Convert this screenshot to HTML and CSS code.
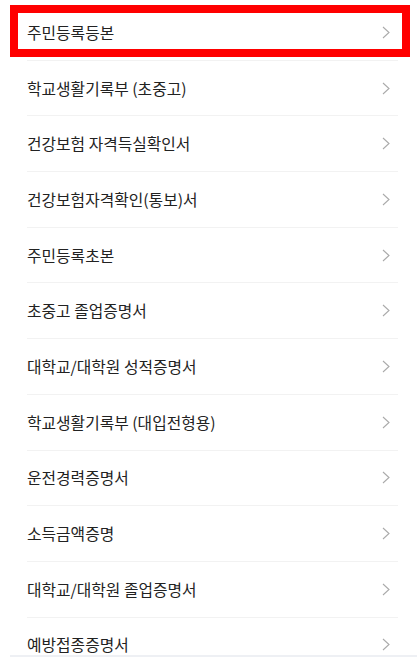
FILE: index.html
```html
<!DOCTYPE html>
<html>
<head>
    <meta charset="utf-8">
    <link rel="stylesheet" href="styles.css">
</head>
<body>
    <div class="doc-list">
        <a href="#" class="doc-item">주민등록등본<svg class="chevron" viewBox="0 0 8 13"><polyline points="1,1 7,6.5 1,12"/></svg></a>
        <a href="#" class="doc-item">학교생활기록부 (초중고)<svg class="chevron" viewBox="0 0 8 13"><polyline points="1,1 7,6.5 1,12"/></svg></a>
        <a href="#" class="doc-item">건강보험 자격득실확인서<svg class="chevron" viewBox="0 0 8 13"><polyline points="1,1 7,6.5 1,12"/></svg></a>
        <a href="#" class="doc-item">건강보험자격확인(통보)서<svg class="chevron" viewBox="0 0 8 13"><polyline points="1,1 7,6.5 1,12"/></svg></a>
        <a href="#" class="doc-item">주민등록초본<svg class="chevron" viewBox="0 0 8 13"><polyline points="1,1 7,6.5 1,12"/></svg></a>
        <a href="#" class="doc-item">초중고 졸업증명서<svg class="chevron" viewBox="0 0 8 13"><polyline points="1,1 7,6.5 1,12"/></svg></a>
        <a href="#" class="doc-item">대학교/대학원 성적증명서<svg class="chevron" viewBox="0 0 8 13"><polyline points="1,1 7,6.5 1,12"/></svg></a>
        <a href="#" class="doc-item">학교생활기록부 (대입전형용)<svg class="chevron" viewBox="0 0 8 13"><polyline points="1,1 7,6.5 1,12"/></svg></a>
        <a href="#" class="doc-item">운전경력증명서<svg class="chevron" viewBox="0 0 8 13"><polyline points="1,1 7,6.5 1,12"/></svg></a>
        <a href="#" class="doc-item">소득금액증명<svg class="chevron" viewBox="0 0 8 13"><polyline points="1,1 7,6.5 1,12"/></svg></a>
        <a href="#" class="doc-item">대학교/대학원 졸업증명서<svg class="chevron" viewBox="0 0 8 13"><polyline points="1,1 7,6.5 1,12"/></svg></a>
        <a href="#" class="doc-item">예방접종증명서<svg class="chevron" viewBox="0 0 8 13"><polyline points="1,1 7,6.5 1,12"/></svg></a>
        <div class="highlight-box"></div>
    </div>
    <div class="bottom-bar"></div>
</body>
</html>
```

FILE: styles.css
```css
html, body {
margin: 0;
padding: 0;
height: 100%;
overflow: hidden;
background-color: #fff;
}

.doc-list {
position: relative;
padding-top: 5px;
}

.doc-item {
display: flex;
align-items: center;
justify-content: space-between;
height: 55.7px;
box-sizing: border-box;
margin-left: 27px;
margin-right: 19px;
padding-right: 8px;
border-bottom: 1px solid #f2f2f2;
font-family: "Noto Sans CJK KR", "Noto Sans", sans-serif;
font-size: 15.8px;
color: #222;
text-decoration: none;
}

.chevron {
width: 8px;
height: 13px;
fill: none;
stroke: #aaa;
stroke-width: 1.1;
}

.highlight-box {
position: absolute;
top: 5px;
left: 10px;
width: 400px;
height: 52px;
box-sizing: border-box;
border: 8px solid #ff0000;
}

.bottom-bar {
position: fixed;
left: 10px;
right: 0;
bottom: 0;
height: 2px;
background-color: #eef0f4;
}
```
